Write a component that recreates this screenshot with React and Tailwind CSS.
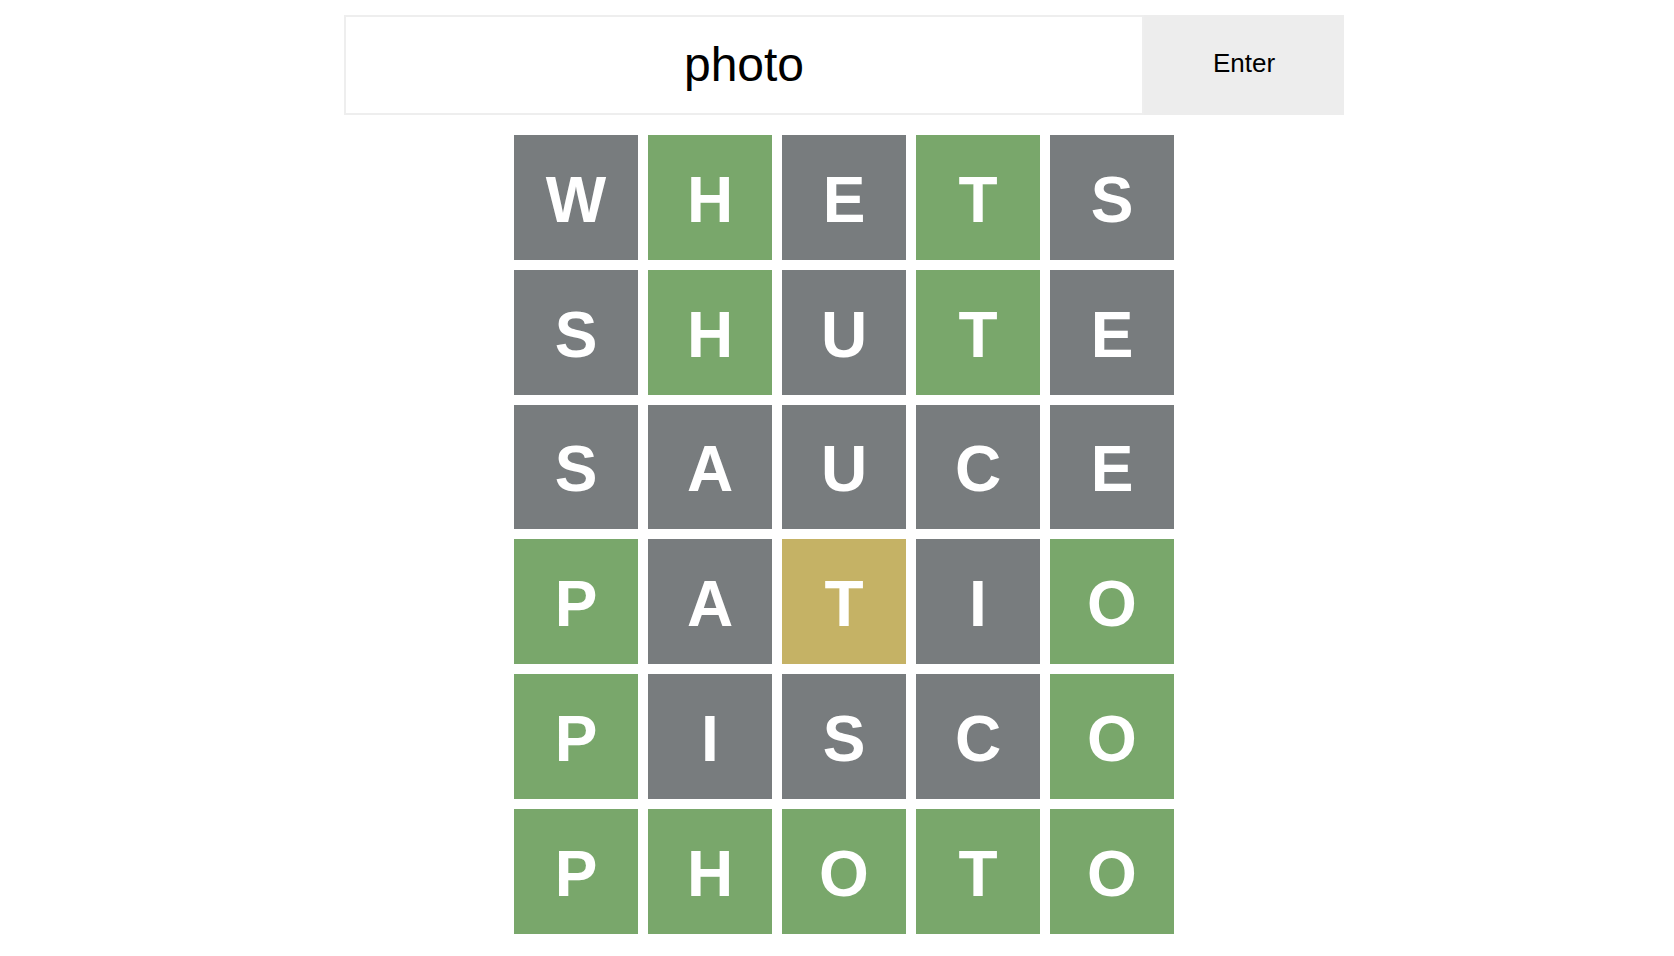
import React from "react"

const ROWS = [
    ["WHETS", "xgxgx"],
    ["SHUTE", "xgxgx"],
    ["SAUCE", "xxxxx"],
    ["PATIO", "gxyxg"],
    ["PISCO", "gxxxg"],
    ["PHOTO", "ggggg"],
]

const tileColor = {
    g: "bg-[#79a76b]",
    y: "bg-[#c5b265]",
    x: "bg-[#787c7e]",
}

function Tile({ letter, state }) {
    return (
        <div
            className={`w-[124px] h-[124.8px] pt-[5px] flex items-center justify-center text-white font-bold text-[64px] leading-none ${tileColor[state]}`}
            style={{ fontFamily: '"Liberation Sans", Arial, sans-serif' }}
        >
            {letter}
        </div>
    )
}

export default function App() {
    return (
        <div className="min-h-[956px] bg-white pt-[15px]" style={{ fontFamily: '"Liberation Sans", Arial, sans-serif' }}>
            <div className="ml-[344px] w-[1000px]">
                {/* Guess input */}
                <div className="flex h-[100px]">
                    <div className="flex-1 border-2 border-[#eeeeee] flex items-center justify-center">
                        <span className="text-[48px] text-black leading-none">photo</span>
                    </div>
                    <button className="w-[200px] bg-[#ededed] flex items-center justify-center text-[26px] text-black pb-[4px]">
                        Enter
                    </button>
                </div>

                {/* Board */}
                <div className="mt-[20px] flex justify-center">
                    <div className="grid grid-cols-5 gap-[10px] w-[660px]">
                        {ROWS.map(([word, states], r) =>
                            word.split("").map((ch, i) => (
                                <Tile key={`${r}-${i}`} letter={ch} state={states[i]} />
                            ))
                        )}
                    </div>
                </div>
            </div>
        </div>
    )
}
